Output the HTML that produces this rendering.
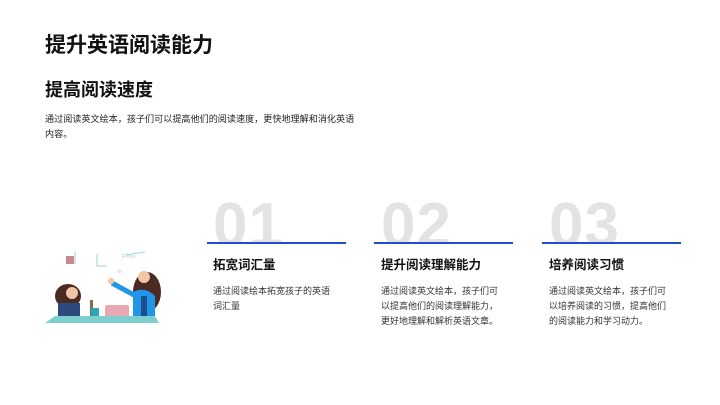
<!DOCTYPE html>
<html><head><meta charset="utf-8"><style>
body{margin:0;width:720px;height:405px;background:#fff;position:relative;overflow:hidden;font-family:"Liberation Sans","Noto Sans CJK SC",sans-serif;color:#111}
.a{position:absolute}
h1{position:absolute;left:45px;top:32px;margin:0;font-size:21px;font-weight:bold;line-height:28px}
h2{position:absolute;left:45px;top:77px;margin:0;font-size:18px;font-weight:bold;line-height:26px}
.p{left:45px;top:112px;width:340px;font-size:9.1px;line-height:15px;color:#222;white-space:nowrap}
.num{font-family:"Liberation Sans",sans-serif;font-weight:bold;font-size:62px;color:#e3e3e3;line-height:62px;top:195px;letter-spacing:1px;height:48px;overflow:hidden}
.ln{height:2px;background:#1f4fc8;top:242px;width:139px}
.hd{font-size:12.5px;font-weight:bold;top:256px;line-height:18px}
.bd{font-size:9px;line-height:15px;top:284px;width:125px;color:#333}
</style></head><body>
<h1>提升英语阅读能力</h1>
<h2>提高阅读速度</h2>
<div class="a p">通过阅读英文绘本，孩子们可以提高他们的阅读速度，更快地理解和消化英语<br>内容。</div>

<div class="a num" style="left:213px">01</div><div class="a ln" style="left:207px"></div>
<div class="a hd" style="left:213px">拓宽词汇量</div>
<div class="a bd" style="left:213px">通过阅读绘本拓宽孩子的英语词汇量</div>

<div class="a num" style="left:381px">02</div><div class="a ln" style="left:374px"></div>
<div class="a hd" style="left:381px">提升阅读理解能力</div>
<div class="a bd" style="left:381px">通过阅读英文绘本，孩子们可以提高他们的阅读理解能力，更好地理解和解析英语文章。</div>

<div class="a num" style="left:549px">03</div><div class="a ln" style="left:542px"></div>
<div class="a hd" style="left:549px">培养阅读习惯</div>
<div class="a bd" style="left:549px">通过阅读英文绘本，孩子们可以培养阅读的习惯，提高他们的阅读能力和学习动力。</div>

<svg class="a" style="left:40px;top:245px" width="130" height="85" viewBox="40 245 130 85">
<rect x="66" y="256" width="8" height="8" fill="#c98a8f"/>
<path d="M75 252v12M97 254v12h10M125 255l20-3" stroke="#9fd3d6" fill="none" stroke-width="1"/>
<text x="122" y="258" font-size="5" fill="#9fd3d6">E=mc²</text>
<text x="116" y="273" font-size="5" fill="#9fd3d6">√π</text>
<ellipse cx="147" cy="292" rx="14" ry="20" fill="#4a2a22"/>
<circle cx="144" cy="277" r="6" fill="#f2c4a8"/>
<path d="M133 292q12-6 22 4v24h-22z" fill="#2196e8"/>
<path d="M112 283l22 12" stroke="#2196e8" stroke-width="5"/>
<circle cx="111" cy="281" r="3" fill="#f2c4a8"/>
<rect x="141" y="296" width="6" height="24" fill="#1e4f8c"/>
<ellipse cx="68" cy="296" rx="13" ry="12" fill="#4a2a22"/>
<circle cx="72" cy="293" r="6" fill="#f2c4a8"/>
<path d="M58 303h22v17H58z" fill="#2c4a7c"/>
<rect x="90" y="300" width="3" height="17" fill="#8a6a4a"/>
<rect x="91" y="308" width="8" height="10" fill="#2aa7b6"/>
<rect x="105" y="305" width="24" height="15" rx="2" fill="#e7a8b4"/>
<path d="M45 323l10-7h100l4 7z" fill="#7dcfcf"/>
</svg>
</body></html>
